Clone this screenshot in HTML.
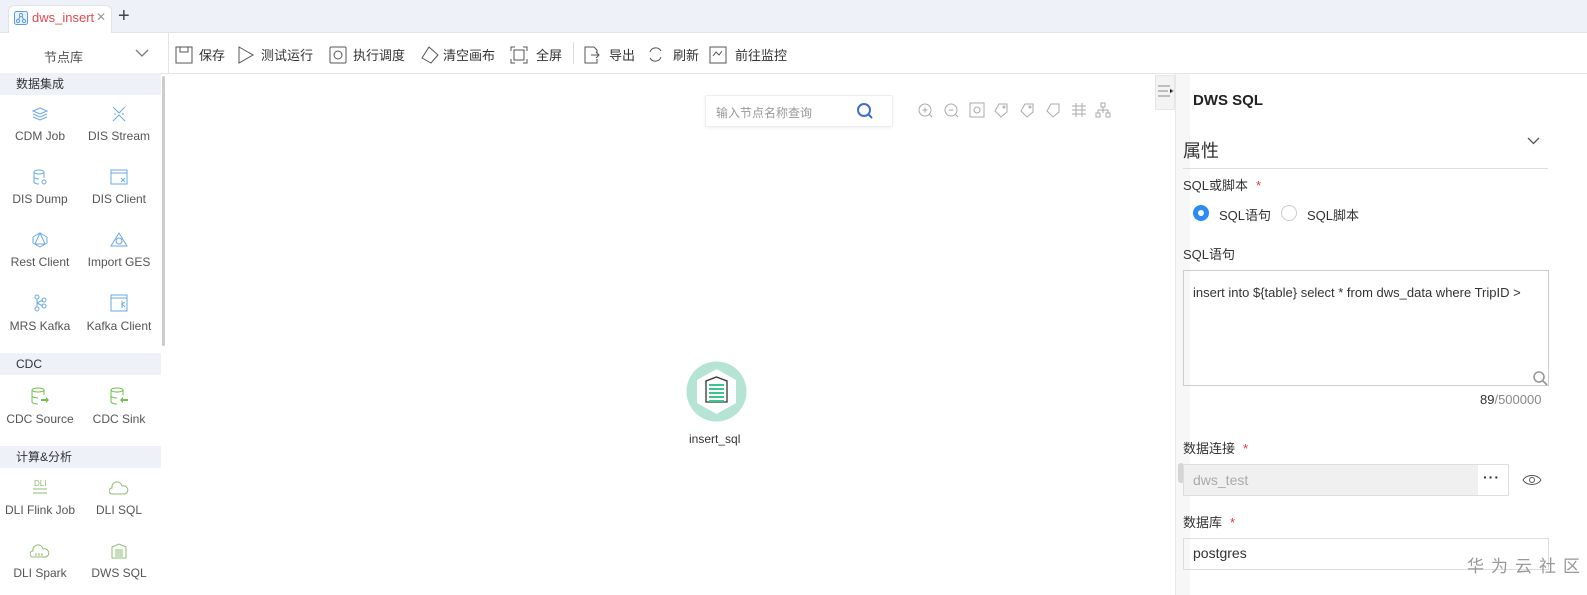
<!DOCTYPE html>
<html><head><meta charset="utf-8"><style>
*{box-sizing:border-box;margin:0;padding:0}
body{width:1587px;height:595px;overflow:hidden;background:#fff;font-family:"Liberation Sans","Noto Sans CJK SC",sans-serif;color:#333;font-size:13px;position:relative}
.abs{position:absolute}
.tabbar{left:0;top:0;width:1587px;height:33px;background:#eef1f8;border-bottom:1px solid #dfe3ea}
.tab{left:8px;top:5px;width:104px;height:29px;background:#fff;border-radius:6px 6px 0 0;border:1px solid #dfe3ea;border-bottom:none}
.toolbar{left:0;top:33px;width:1587px;height:41px;border-bottom:1px solid #e4e4e4;background:#fff}
.tb{top:45px;font-size:13px;color:#333;display:flex;align-items:center}
.side{left:0;top:74px;width:163px;height:521px;background:#fff}
.sec{left:0;width:161px;height:22px;background:#eef1f8;font-size:12px;padding-left:16px;line-height:22px;color:#333}
.item{width:80px;text-align:center;font-size:12px;color:#555}
.item svg{display:block;margin:0 auto 7px}
.lbl{font-size:13px;color:#333}
.star{color:#e33;margin-left:8px}
</style></head><body>
<div class="abs tabbar"></div>
<div class="abs tab"></div>
<svg class="abs" style="left:14px;top:11px" width="14" height="14"><rect x="0.5" y="0.5" width="13" height="13" rx="2" fill="#eaf2fd" stroke="#5b9bdf"/><circle cx="7" cy="4" r="1.6" fill="none" stroke="#5b9bdf"/><circle cx="4" cy="10" r="1.6" fill="none" stroke="#5b9bdf"/><circle cx="10" cy="10" r="1.6" fill="none" stroke="#5b9bdf"/><path d="M6 5.5 4.5 8.5M8 5.5 9.5 8.5" stroke="#5b9bdf"/></svg>
<div class="abs" style="left:32px;top:10px;color:#e5484d;font-size:13px">dws_insert</div>
<div class="abs" style="left:96px;top:10px;color:#999;font-size:12px">✕</div>
<div class="abs" style="left:118px;top:5px;color:#444;font-size:20px">+</div>

<div class="abs toolbar"></div>
<div class="abs" style="left:168px;top:33px;width:1px;height:41px;background:#e4e4e4"></div>
<div class="abs" style="left:44px;top:47px;font-size:13px;color:#555">节点库</div>
<svg class="abs" style="left:135px;top:49px" width="14" height="9"><path d="M1 1 7 7 13 1" fill="none" stroke="#777" stroke-width="1.3"/></svg>

<div class="abs tb" style="left:175px"><svg width="18" height="18"><rect x="1" y="1" width="16" height="16" fill="none" stroke="#555"/><path d="M5 1v5h8V1" fill="none" stroke="#555"/></svg><span style="margin-left:6px">保存</span></div>
<div class="abs tb" style="left:237px"><svg width="18" height="18"><path d="M2 1 16 9 2 17Z" fill="none" stroke="#555"/></svg><span style="margin-left:6px">测试运行</span></div>
<div class="abs tb" style="left:329px"><svg width="18" height="18"><rect x="1" y="1" width="16" height="16" rx="1" fill="none" stroke="#555"/><circle cx="9" cy="9" r="4" fill="none" stroke="#555"/></svg><span style="margin-left:6px">执行调度</span></div>
<div class="abs tb" style="left:420px"><svg width="19" height="18"><path d="M9 1 18 9 11 17 2 12Z" fill="none" stroke="#555"/></svg><span style="margin-left:4px">清空画布</span></div>
<div class="abs tb" style="left:510px"><svg width="18" height="18"><path d="M1 5V1h4M13 1h4v4M17 13v4h-4M5 17H1v-4" fill="none" stroke="#555"/><rect x="4" y="4" width="10" height="10" fill="none" stroke="#555"/></svg><span style="margin-left:8px">全屏</span></div>
<div class="abs" style="left:573px;top:42px;width:1px;height:22px;background:#ddd"></div>
<div class="abs tb" style="left:583px"><svg width="18" height="18"><path d="M11 1H2v16h12v-4M11 1l3 3v3M8 9h8M13 6l3 3-3 3" fill="none" stroke="#555"/></svg><span style="margin-left:8px">导出</span></div>
<div class="abs tb" style="left:647px"><svg width="18" height="18"><path d="M3 6A6 6 0 0 1 14 5M14 11A6 6 0 0 1 3 12" fill="none" stroke="#555"/></svg><span style="margin-left:8px">刷新</span></div>
<div class="abs tb" style="left:709px"><svg width="18" height="18"><rect x="1" y="1" width="16" height="16" fill="none" stroke="#555"/><path d="M4 10 7 6 10 9 13 5" fill="none" stroke="#555"/></svg><span style="margin-left:8px">前往监控</span></div>

<div class="abs side"></div>
<div class="abs" style="left:162px;top:76px;width:3px;height:270px;background:#ccc;border-radius:2px"></div>
<div class="abs sec" style="top:73px">数据集成</div>
<div class="abs sec" style="top:353px">CDC</div>
<div class="abs sec" style="top:446px">计算&amp;分析</div>

<div class="abs item" style="left:0;top:106px"><svg width="16" height="16"><path d="M8 2 15 5 8 8 1 5Z M1 8l7 3 7-3M1 11l7 3 7-3" fill="none" stroke="#6aa9e8"/></svg>CDM Job</div>
<div class="abs item" style="left:79px;top:106px"><svg width="16" height="16"><path d="M2 1 8 7 14 1M2 15 8 9 14 15M3 8h2M11 8h2" fill="none" stroke="#6aa9e8"/></svg>DIS Stream</div>
<div class="abs item" style="left:0;top:169px"><svg width="16" height="16"><ellipse cx="7" cy="3" rx="5" ry="2" fill="none" stroke="#6aa9e8"/><path d="M2 3v10c0 1 2 2 5 2M12 3v6M2 8c0 1 2 2 5 2" fill="none" stroke="#6aa9e8"/><circle cx="12" cy="13" r="2" fill="none" stroke="#6aa9e8"/></svg>DIS Dump</div>
<div class="abs item" style="left:79px;top:169px"><svg width="18" height="16"><rect x="1" y="1" width="16" height="14" fill="none" stroke="#6aa9e8"/><path d="M1 4h16M11 9l4 4M15 9l-4 4" fill="none" stroke="#6aa9e8"/></svg>DIS Client</div>
<div class="abs item" style="left:0;top:232px"><svg width="16" height="16"><path d="M8 1 15 5v6l-7 4-7-4V5ZM8 1 3 12h10Z" fill="none" stroke="#6aa9e8"/></svg>Rest Client</div>
<div class="abs item" style="left:79px;top:232px"><svg width="18" height="16"><path d="M9 1 17 14H1Z" fill="none" stroke="#6aa9e8"/><circle cx="9" cy="9" r="3" fill="none" stroke="#6aa9e8"/></svg>Import GES</div>
<div class="abs item" style="left:0;top:294px"><svg width="14" height="18"><circle cx="4" cy="3" r="2" fill="none" stroke="#6aa9e8"/><circle cx="4" cy="15" r="2" fill="none" stroke="#6aa9e8"/><circle cx="11" cy="6" r="2" fill="none" stroke="#6aa9e8"/><circle cx="11" cy="12" r="2" fill="none" stroke="#6aa9e8"/><path d="M4 5v8M4 9l6-3M4 9l6 3" fill="none" stroke="#6aa9e8"/></svg>MRS Kafka</div>
<div class="abs item" style="left:79px;top:294px"><svg width="18" height="18"><rect x="1" y="1" width="16" height="16" fill="none" stroke="#6aa9e8"/><path d="M1 4h16M12 7v7M12 10l3-2M12 10l3 3" fill="none" stroke="#6aa9e8"/></svg>Kafka Client</div>
<div class="abs item" style="left:0;top:387px"><svg width="20" height="18"><ellipse cx="8" cy="3" rx="6" ry="2" fill="none" stroke="#6cc24a"/><path d="M2 3v12c0 1 3 2 6 2M14 3v5M2 9c0 1 3 2 6 2" fill="none" stroke="#6cc24a"/><path d="M11 12h5v-2l3 3-3 3v-2h-5Z" fill="#6cc24a"/></svg>CDC Source</div>
<div class="abs item" style="left:79px;top:387px"><svg width="20" height="18"><ellipse cx="8" cy="3" rx="6" ry="2" fill="none" stroke="#6cc24a"/><path d="M2 3v12c0 1 3 2 6 2M14 3v5M2 9c0 1 3 2 6 2" fill="none" stroke="#6cc24a"/><path d="M19 12h-5v-2l-3 3 3 3v-2h5Z" fill="#6cc24a"/></svg>CDC Sink</div>
<div class="abs item" style="left:0;top:478px"><svg width="18" height="18"><text x="3" y="8" font-size="8" fill="#8dbf73" font-family="Liberation Sans">DLI</text><path d="M2 11h14M2 15h14" stroke="#8dbf73"/></svg>DLI Flink Job</div>
<div class="abs item" style="left:79px;top:480px"><svg width="20" height="16"><path d="M5 14H3a3 3 0 0 1 0-6 5 5 0 0 1 10-2 4 4 0 0 1 3 8H5" fill="none" stroke="#8dbf73"/></svg>DLI SQL</div>
<div class="abs item" style="left:0;top:543px"><svg width="20" height="16"><path d="M5 14H3a3 3 0 0 1 0-6 5 5 0 0 1 10-2 4 4 0 0 1 3 8H5M6 10v3M9 10v3M12 10v3" fill="none" stroke="#8dbf73"/></svg>DLI Spark</div>
<div class="abs item" style="left:79px;top:543px"><svg width="16" height="16"><path d="M1 15V4l7-3 7 3v11ZM4 7h8M4 9h8M4 11h8M4 13h8" fill="none" stroke="#8dbf73"/></svg>DWS SQL</div>

<div class="abs" style="left:705px;top:95px;width:188px;height:32px;border:1px solid #eceef2;border-radius:2px;box-shadow:0 1px 3px rgba(0,0,0,.06)"></div>
<div class="abs" style="left:716px;top:104px;font-size:12px;color:#999">输入节点名称查询</div>
<svg class="abs" style="left:856px;top:102px" width="18" height="18"><circle cx="8" cy="8" r="6" fill="none" stroke="#3d6ce0" stroke-width="2"/><path d="M12.5 12.5 16 16" stroke="#3d6ce0" stroke-width="2"/></svg>
<svg class="abs" style="left:917px;top:102px" width="200" height="16" fill="none" stroke="#aaa">
<circle cx="8" cy="8" r="6"/><path d="M5.5 8h5M8 5.5v5M12 12l3 3"/>
<circle cx="34" cy="8" r="6"/><path d="M31.5 8h5M38 12l3 3"/>
<rect x="53" y="1" width="14" height="14"/><circle cx="60" cy="8" r="3"/>
<path d="M82 2 90 2 90 10 84 15 78 9Z"/><circle cx="87" cy="5" r="1"/>
<path d="M108 2 116 2 116 10 110 15 104 9Z"/><circle cx="113" cy="5" r="1"/>
<path d="M134 2 142 2 142 10 136 15 130 9Z"/>
<path d="M155 4h14M155 8h14M155 12h14M159 1v14M165 1v14"/>
<rect x="184" y="1" width="4" height="4"/><rect x="179" y="11" width="4" height="4"/><rect x="189" y="11" width="4" height="4"/><path d="M186 5v3M181 11V8h10v3M186 8v3"/>
</svg>

<svg class="abs" style="left:686px;top:361px" width="61" height="61"><circle cx="30.5" cy="30.5" r="30" fill="#b5e3d4"/><path d="M30.5 8 50 19v23L30.5 53 11 42V19Z" fill="#fff"/><path d="M20 41V20l10.5-4 10.5 4v21Z" fill="none" stroke="#333" stroke-width="1.3"/><g stroke="#3cc58f" stroke-width="2"><path d="M23 24h15M23 28h15M23 32h15M23 36h15M23 40h15"/></g></svg>
<div class="abs" style="left:689px;top:432px;font-size:12px;color:#333">insert_sql</div>

<div class="abs" style="left:1175px;top:74px;width:15px;height:521px;background:#f7f7f7;border-left:1px solid #e8e8e8"></div>
<div class="abs" style="left:1155px;top:75px;width:20px;height:35px;background:#f3f3f3;border:1px solid #e5e5e5"></div>
<svg class="abs" style="left:1158px;top:85px" width="16" height="12" stroke="#888"><path d="M0 1h12M0 6h10M0 11h12M12 4l3 2-3 2"/></svg>
<div class="abs" style="left:1178px;top:463px;width:6px;height:20px;background:#d5d5d5;border-radius:3px"></div>
<div class="abs" style="left:1190px;top:74px;width:397px;height:521px;background:#fff"></div>

<div class="abs" style="left:1193px;top:92px;font-size:15px;font-weight:bold;color:#222">DWS SQL</div>
<div class="abs" style="left:1183px;top:137px;font-size:18px;color:#333">属性</div>
<svg class="abs" style="left:1527px;top:137px" width="13" height="8"><path d="M1 1 6.5 6.5 12 1" fill="none" stroke="#555" stroke-width="1.3"/></svg>
<div class="abs" style="left:1183px;top:168px;width:365px;height:1px;background:#ddd"></div>
<div class="abs lbl" style="left:1183px;top:175px">SQL或脚本<span class="star">*</span></div>
<div class="abs" style="left:1193px;top:205px;width:16px;height:16px;border-radius:50%;background:#2b8cf5"></div>
<div class="abs" style="left:1198px;top:210px;width:6px;height:6px;border-radius:50%;background:#fff"></div>
<div class="abs lbl" style="left:1219px;top:205px">SQL语句</div>
<div class="abs" style="left:1281px;top:205px;width:16px;height:16px;border-radius:50%;border:1px solid #ccc"></div>
<div class="abs lbl" style="left:1307px;top:205px">SQL脚本</div>
<div class="abs lbl" style="left:1183px;top:244px">SQL语句</div>
<div class="abs" style="left:1183px;top:270px;width:366px;height:116px;border:1px solid #ccc"></div>
<div class="abs" style="left:1193px;top:285px;font-size:13px;color:#333;white-space:nowrap;width:355px;overflow:hidden">insert into ${table} select * from dws_data where TripID &gt;</div>
<svg class="abs" style="left:1532px;top:370px" width="16" height="16"><circle cx="7" cy="7" r="5" fill="none" stroke="#999" stroke-width="1.6"/><path d="M11 11 15 15" stroke="#999" stroke-width="1.8"/></svg>
<div class="abs" style="left:1480px;top:392px;font-size:13px;color:#333">89<span style="color:#888">/500000</span></div>
<div class="abs lbl" style="left:1183px;top:438px">数据连接<span class="star">*</span></div>
<div class="abs" style="left:1183px;top:464px;width:326px;height:32px;border:1px solid #ddd;background:#f0f0f0"></div>
<div class="abs" style="left:1478px;top:465px;width:30px;height:30px;background:#fff"></div>
<div class="abs" style="left:1193px;top:472px;font-size:14px;color:#aaa">dws_test</div>
<div class="abs" style="left:1483px;top:469px;font-size:14px;color:#333;letter-spacing:1px;font-weight:bold">···</div>
<svg class="abs" style="left:1522px;top:473px" width="20" height="14"><path d="M1 7C5 1 15 1 19 7 15 13 5 13 1 7Z" fill="none" stroke="#555"/><circle cx="10" cy="7" r="2.5" fill="none" stroke="#555"/></svg>
<div class="abs lbl" style="left:1183px;top:512px">数据库<span class="star">*</span></div>
<div class="abs" style="left:1183px;top:538px;width:366px;height:32px;border:1px solid #ddd"></div>
<div class="abs" style="left:1193px;top:545px;font-size:14px;color:#333">postgres</div>
<div class="abs" style="left:1467px;top:552px;font-size:17px;color:#999;letter-spacing:7px">华为云社区</div>
</body></html>
